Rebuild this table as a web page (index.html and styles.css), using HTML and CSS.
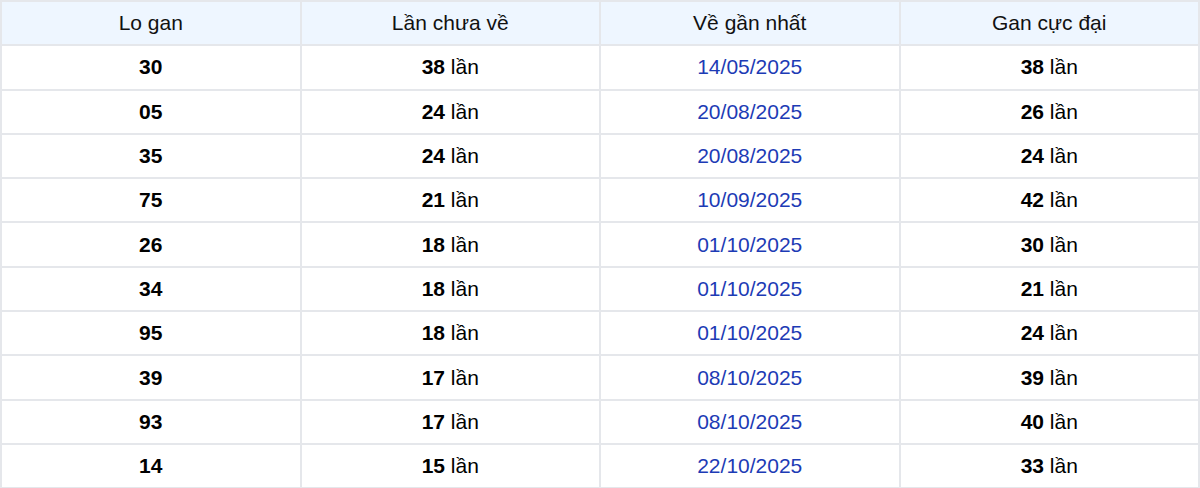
FILE: index.html
```html
<!DOCTYPE html>
<html lang="vi">
<head>
<meta charset="utf-8">
<link rel="stylesheet" href="styles.css">
</head>
<body>
<table class="gan-table">
  <thead>
    <tr><th>Lo gan</th><th>Lần chưa về</th><th>Về gần nhất</th><th>Gan cực đại</th></tr>
  </thead>
  <tbody>
    <tr><td><b>30</b></td><td><b>38</b> lần</td><td class="date">14/05/2025</td><td><b>38</b> lần</td></tr>
    <tr><td><b>05</b></td><td><b>24</b> lần</td><td class="date">20/08/2025</td><td><b>26</b> lần</td></tr>
    <tr><td><b>35</b></td><td><b>24</b> lần</td><td class="date">20/08/2025</td><td><b>24</b> lần</td></tr>
    <tr><td><b>75</b></td><td><b>21</b> lần</td><td class="date">10/09/2025</td><td><b>42</b> lần</td></tr>
    <tr><td><b>26</b></td><td><b>18</b> lần</td><td class="date">01/10/2025</td><td><b>30</b> lần</td></tr>
    <tr><td><b>34</b></td><td><b>18</b> lần</td><td class="date">01/10/2025</td><td><b>21</b> lần</td></tr>
    <tr><td><b>95</b></td><td><b>18</b> lần</td><td class="date">01/10/2025</td><td><b>24</b> lần</td></tr>
    <tr><td><b>39</b></td><td><b>17</b> lần</td><td class="date">08/10/2025</td><td><b>39</b> lần</td></tr>
    <tr><td><b>93</b></td><td><b>17</b> lần</td><td class="date">08/10/2025</td><td><b>40</b> lần</td></tr>
    <tr><td><b>14</b></td><td><b>15</b> lần</td><td class="date">22/10/2025</td><td><b>33</b> lần</td></tr>
  </tbody>
</table>
</body>
</html>
```

FILE: styles.css
```css
html, body {
  margin: 0;
  padding: 0;
  background: #ffffff;
}
body {
  font-family: "Liberation Sans", Arial, sans-serif;
  color: #000000;
}
.gan-table {
  width: 1200px;
  border-collapse: collapse;
  table-layout: fixed;
  font-size: 21px;
  line-height: 24px;
}
.gan-table tr {
  height: 44.3px;
}
.gan-table th,
.gan-table td {
  border: 2px solid #e5e7eb;
  text-align: center;
  vertical-align: middle;
  padding: 0;
}
.gan-table th {
  background: #eef6ff;
  font-weight: normal;
  color: #111111;
}
.gan-table b {
  font-weight: bold;
}
.gan-table .date {
  color: #1d3bb5;
}
```
